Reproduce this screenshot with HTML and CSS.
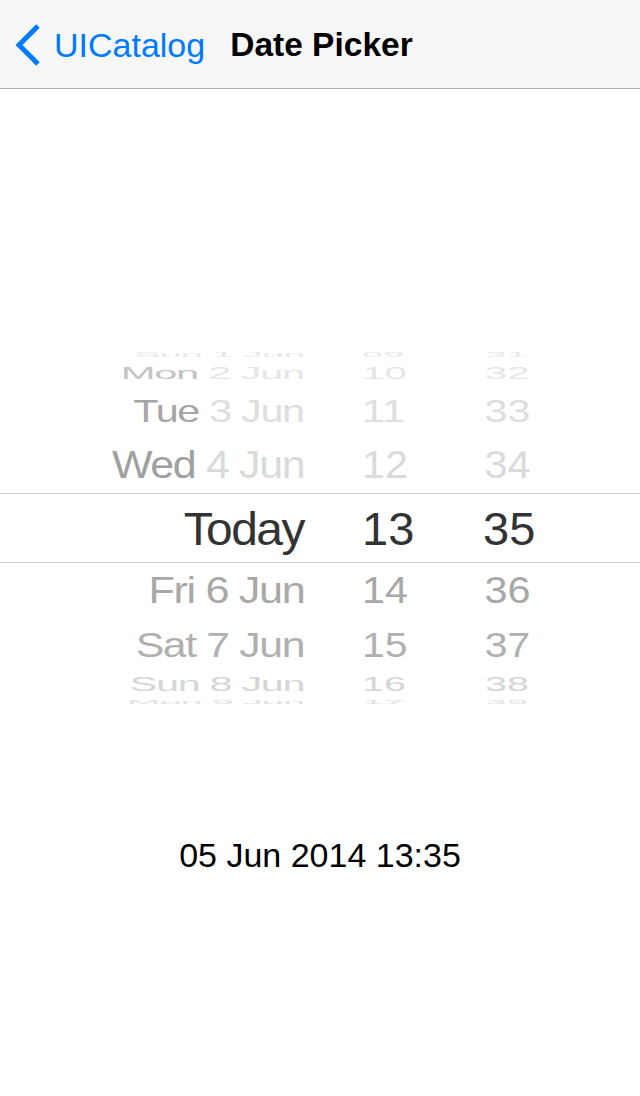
FILE: index.html
```html
<!DOCTYPE html>
<html lang="en">
<head>
<meta charset="utf-8">
<title>Date Picker</title>
<link rel="stylesheet" href="styles.css">
</head>
<body>
<header class="nav">
  <a class="back" href="#">
    <svg class="chevron" width="28" height="44" viewBox="0 0 28 44" aria-hidden="true">
      <path d="M24 3 L5 22 L24 41" />
    </svg>
    <span class="back-label">UICatalog</span>
  </a>
  <h1 class="title">Date Picker</h1>
</header>
<main class="content">
  <div class="picker">
    <div class="row r-m4">
      <div class="cell date"><span class="txt">Sun 1 Jun</span></div>
      <div class="cell hour"><span class="txt">09</span></div>
      <div class="cell min"><span class="txt">31</span></div>
    </div>
    <div class="row r-m3">
      <div class="cell date"><span class="txt"><span class="day">Mon</span> 2 Jun</span></div>
      <div class="cell hour"><span class="txt">10</span></div>
      <div class="cell min"><span class="txt">32</span></div>
    </div>
    <div class="row r-m2">
      <div class="cell date"><span class="txt"><span class="day">Tue</span> 3 Jun</span></div>
      <div class="cell hour"><span class="txt">11</span></div>
      <div class="cell min"><span class="txt">33</span></div>
    </div>
    <div class="row r-m1">
      <div class="cell date"><span class="txt"><span class="day">Wed</span> 4 Jun</span></div>
      <div class="cell hour"><span class="txt">12</span></div>
      <div class="cell min"><span class="txt">34</span></div>
    </div>
    <div class="row r-0">
      <div class="cell date"><span class="txt">Today</span></div>
      <div class="cell hour"><span class="txt">13</span></div>
      <div class="cell min"><span class="txt">35</span></div>
    </div>
    <div class="row r-p1">
      <div class="cell date"><span class="txt">Fri 6 Jun</span></div>
      <div class="cell hour"><span class="txt">14</span></div>
      <div class="cell min"><span class="txt">36</span></div>
    </div>
    <div class="row r-p2">
      <div class="cell date"><span class="txt">Sat 7 Jun</span></div>
      <div class="cell hour"><span class="txt">15</span></div>
      <div class="cell min"><span class="txt">37</span></div>
    </div>
    <div class="row r-p3">
      <div class="cell date"><span class="txt">Sun 8 Jun</span></div>
      <div class="cell hour"><span class="txt">16</span></div>
      <div class="cell min"><span class="txt">38</span></div>
    </div>
    <div class="row r-p4">
      <div class="cell date"><span class="txt">Mon 9 Jun</span></div>
      <div class="cell hour"><span class="txt">17</span></div>
      <div class="cell min"><span class="txt">39</span></div>
    </div>
  </div>
  <p class="result">05 Jun 2014 13:35</p>
</main>
</body>
</html>
```

FILE: styles.css
```css
* { box-sizing: border-box; }

html, body {
  margin: 0;
  padding: 0;
  background: #ffffff;
}

body {
  width: 640px;
  height: 1096px;
  overflow: hidden;
  font-family: "Liberation Sans", Arial, sans-serif;
  color: #000;
}

/* Navigation bar */
.nav {
  height: 89px;
  background: #f7f7f7;
  border-bottom: 1px solid #b2b2b2;
  display: flex;
  align-items: center;
  padding: 2px 0 0 14px;
}

.back {
  display: flex;
  align-items: center;
  text-decoration: none;
  color: #007aff;
}

.chevron {
  display: block;
  flex: none;
}

.chevron path {
  fill: none;
  stroke: #007aff;
  stroke-width: 5;
  stroke-linecap: butt;
  stroke-linejoin: miter;
}

.back-label {
  margin-left: 12px;
  font-size: 34px;
  line-height: 40px;
}

.title {
  margin: 0 0 0 25px;
  font-size: 33.5px;
  line-height: 40px;
  font-weight: bold;
  color: #000;
}

/* Picker */
.content {
  padding-top: 260px;
}

.picker {
  height: 356px;
  overflow: hidden;
}

.row {
  display: flex;
  align-items: center;
  width: 640px;
}

.cell {
  display: flex;
  align-items: center;
  flex: none;
  font-size: 47px;
  line-height: 1;
}

.txt {
  display: block;
  white-space: nowrap;
  transform: scale(var(--sx), var(--sy));
}

.date {
  width: 304px;
  justify-content: flex-end;
}

.date .txt {
  letter-spacing: -1.5px;
  transform-origin: right center;
  transform: scale(var(--dx), var(--sy));
}

.hour {
  width: 179px;
  padding-left: 58px;
}

.hour .txt {
  transform-origin: left center;
}

.min {
  width: 157px;
}

.min .txt {
  transform-origin: 25% center;
}

.r-m4 { height: 11px; --dx: 0.86; --sx: 0.8;  --sy: 0.15; color: #e8e8e8; }
.r-m3 { height: 26px; --dx: 0.89; --sx: 0.86; --sy: 0.35; color: #e6e6e6; }
.r-m2 { height: 50px; --dx: 0.88; --sx: 0.88; --sy: 0.65; color: #dedede; }
.r-m1 { height: 57px; --dx: 0.915; --sx: 0.88; --sy: 0.82; color: #dadada; }
.r-0  {
  height: 70px;
  --dx: 1.02; --sx: 1; --sy: 1;
  color: #333333;
  border-top: 1px solid #cfcfcf;
  border-bottom: 1px solid #cfcfcf;
}
.r-p1 { height: 54px; --dx: 0.92; --sx: 0.88; --sy: 0.77; color: #a8a8a8; }
.r-p2 { height: 55px; --dx: 0.91; --sx: 0.87; --sy: 0.74; color: #b0b0b0; }
.r-p3 { height: 22px; --dx: 0.88; --sx: 0.84; --sy: 0.44; color: #d5d5d5; }
.r-p4 { height: 16px; --dx: 0.86; --sx: 0.82; --sy: 0.12; color: #e2e2e2; }

.r-m3 .day { color: #c4c4c4; }
.r-m2 .day { color: #a6a6a6; }
.r-m1 .day { color: #a0a0a0; }

/* Result label */
.result {
  margin: 130px 0 0;
  text-align: center;
  font-size: 34px;
  line-height: 40px;
  color: #000;
}
```
